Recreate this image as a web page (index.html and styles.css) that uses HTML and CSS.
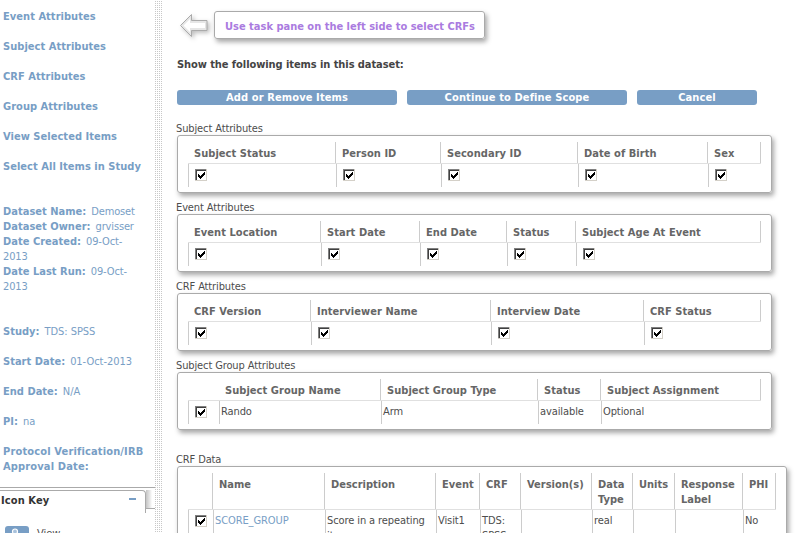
FILE: index.html
```html
<!DOCTYPE html>
<html lang="en">
<head>
<meta charset="utf-8">
<title>Dataset items</title>
<link rel="stylesheet" href="styles.css">
</head>
<body>
<svg class="defs" width="0" height="0" aria-hidden="true">
  <symbol id="box" viewBox="0 0 12 12">
    <path fill="#fff" d="M0 0h12v12H0z"/>
    <path fill="#d4d0c8" d="M11 0h1v12H0v-1h11z"/>
    <path fill="#808080" d="M0 0h11v1H1v10H0z"/>
    <path fill="#404040" d="M1 1h10v1H2v9H1z"/>
    <path fill="#000" d="M3 5h1v3H3zM4 6h1v3H4zM5 7h1v3H5zM6 6h1v3H6zM7 5h1v3H7zM8 4h1v3H8zM9 3h1v3H9z"/>
  </symbol>
</svg>
<div class="page">
  <aside class="side">
    <nav class="links">
      <a>Event Attributes</a>
      <a>Subject Attributes</a>
      <a>CRF Attributes</a>
      <a>Group Attributes</a>
      <a>View Selected Items</a>
      <a>Select All Items in Study</a>
    </nav>
    <div class="info">
      <p><b>Dataset Name:</b> <span>Demoset</span></p>
      <p><b>Dataset Owner:</b> <span>grvisser</span></p>
      <p><b>Date Created:</b> <span>09-Oct-<br>2013</span></p>
      <p><b>Date Last Run:</b> <span>09-Oct-<br>2013</span></p>
    </div>
    <div class="info study">
      <p><b>Study:</b> <span>TDS: SPSS</span></p>
      <p><b>Start Date:</b> <span>01-Oct-2013</span></p>
      <p><b>End Date:</b> <span>N/A</span></p>
      <p><b>PI:</b> <span>na</span></p>
      <p><b class="long">Protocol Verification/IRB<br>Approval Date:</b></p>
    </div>
    <div class="key">
      <div class="key-head">
        <div class="tab"><b>Icon Key</b><i class="minus"></i></div>
        <div class="tab-edge"></div>
      </div>
      <div class="key-row">
        <svg width="24" height="20" viewBox="0 0 24 20"><rect width="24" height="20" rx="3" fill="#789ec5"/><circle cx="10" cy="5.500" r="2.500" fill="#a9c2dc" stroke="#fff" stroke-width="1.200"/><path d="M12 8l4 4" stroke="#fff" stroke-width="1.500"/></svg>
        <span>View</span>
      </div>
    </div>
  </aside>
  <div class="divider"></div>
  <main class="main">
    <div class="hint">
      <svg class="arrow" width="32" height="28" viewBox="0 0 32 28"><path d="M1.500 13.500L12.500 2.500v6H28v10H12.500v6z" fill="#e6e6e6" stroke="#aaa"/><path d="M4.500 13.500l6.500-6.500v4h15V16H11v4z" fill="#fff"/></svg>
      <div class="callout">Use task pane on the left side to select CRFs</div>
    </div>
    <h1>Show the following items in this dataset:</h1>
    <div class="buttons">
      <button>Add or Remove Items</button>
      <button>Continue to Define Scope</button>
      <button class="small">Cancel</button>
    </div>

    <h2>Subject Attributes</h2>
    <section class="panel">
      <div class="row head subject"><b>Subject Status</b><b>Person ID</b><b>Secondary ID</b><b>Date of Birth</b><b>Sex</b></div>
      <div class="row body subject"><span><svg class="cb"><use href="#box"/></svg></span><span><svg class="cb"><use href="#box"/></svg></span><span><svg class="cb"><use href="#box"/></svg></span><span><svg class="cb"><use href="#box"/></svg></span><span><svg class="cb"><use href="#box"/></svg></span></div>
    </section>

    <h2>Event Attributes</h2>
    <section class="panel">
      <div class="row head event"><b>Event Location</b><b>Start Date</b><b>End Date</b><b>Status</b><b>Subject Age At Event</b></div>
      <div class="row body event"><span><svg class="cb"><use href="#box"/></svg></span><span><svg class="cb"><use href="#box"/></svg></span><span><svg class="cb"><use href="#box"/></svg></span><span><svg class="cb"><use href="#box"/></svg></span><span><svg class="cb"><use href="#box"/></svg></span></div>
    </section>

    <h2>CRF Attributes</h2>
    <section class="panel">
      <div class="row head crf"><b>CRF Version</b><b>Interviewer Name</b><b>Interview Date</b><b>CRF Status</b></div>
      <div class="row body crf"><span><svg class="cb"><use href="#box"/></svg></span><span><svg class="cb"><use href="#box"/></svg></span><span><svg class="cb"><use href="#box"/></svg></span><span><svg class="cb"><use href="#box"/></svg></span></div>
    </section>

    <h2>Subject Group Attributes</h2>
    <section class="panel">
      <div class="row head group"><b class="blank"></b><b>Subject Group Name</b><b>Subject Group Type</b><b>Status</b><b>Subject Assignment</b></div>
      <div class="row body group"><span><svg class="cb"><use href="#box"/></svg></span><span>Rando</span><span>Arm</span><span>available</span><span>Optional</span></div>
    </section>

    <h2 class="spaced">CRF Data</h2>
    <section class="panel wide">
      <div class="row head data"><b></b><b>Name</b><b>Description</b><b>Event</b><b>CRF</b><b>Version(s)</b><b>Data<br>Type</b><b>Units</b><b>Response<br>Label</b><b>PHI</b></div>
      <div class="row body data"><span><svg class="cb"><use href="#box"/></svg></span><span><a>SCORE_GROUP</a></span><span>Score in a repeating<br>item group</span><span>Visit1</span><span>TDS:<br>SPSS</span><span></span><span>real</span><span></span><span></span><span>No</span></div>
    </section>
  </main>
</div>
</body>
</html>
```
FILE: styles.css
```css
* { box-sizing: border-box; margin: 0; padding: 0; }
body {
  width: 807px;
  height: 533px;
  overflow: hidden;
  background: #fff;
  color: #4d4d4d;
  font: 11px/15px "DejaVu Sans Condensed", "DejaVu Sans", sans-serif;
  font-stretch: condensed;
}
.defs { position: absolute; }
.page { display: flex; height: 533px; overflow: hidden; }

.side { width: 155px; height: 533px; overflow: hidden; color: #789ec5; white-space: nowrap; }
.links { display: flex; flex-direction: column; gap: 15px; padding: 9px 0 0 3px; font-weight: bold; letter-spacing: 0.04px; }
.info { padding: 30px 0 0 3px; letter-spacing: -0.15px; }
.info b { letter-spacing: 0.02px; margin-right: 2px; }
.info .long { letter-spacing: 0.15px; }
.study { display: flex; flex-direction: column; gap: 15px; }
.study span { letter-spacing: -0.05px; }
.key { margin-top: 13px; border-top: 1px solid #aaa; color: #4d4d4d; }
.key-head { display: flex; }
.tab {
  display: flex;
  align-items: center;
  justify-content: space-between;
  width: 146px;
  height: 23px;
  margin-top: 2px;
  padding: 0 10px 3px 1px;
  border-top: 1px solid #aaa;
  border-right: 1px solid #aaa;
  border-top-right-radius: 4px;
}
.tab b { color: #333; letter-spacing: 0.1px; }
.minus { width: 7px; height: 2px; margin: 0 -1px 3px 0; background: #789ec5; }
.tab-edge {
  flex: 1;
  margin-top: 2px;
  height: 19px;
  border-bottom: 1px solid #aaa;
  background: linear-gradient(to right, #c4c4c4, #f2f2f2 5px, #fff 6px);
}
.key-row { display: flex; gap: 8px; padding: 13px 0 0 5px; }

.divider {
  width: 8px;
  margin-right: 14px;
  background-image: linear-gradient(#c8c8c8 1px, transparent 1px);
  background-position: 0 1px;
  background-size: 2px 2px;
  -webkit-mask: repeating-linear-gradient(to right, #000 0 1px, transparent 1px 2px);
  mask: repeating-linear-gradient(to right, #000 0 1px, transparent 1px 2px);
}

.main { flex: 1; }
.hint { display: flex; align-items: flex-start; gap: 3px; height: 57px; padding: 11px 0 0 2px; }
.arrow { margin-top: 1px; filter: drop-shadow(2px 2px 2px rgba(0, 0, 0, .25)); }
.callout {
  width: 271px;
  height: 28px;
  padding: 7px 10px;
  border: 1px solid #aaa;
  border-radius: 3px;
  box-shadow: 2px 3px 5px rgba(0, 0, 0, .35);
  color: #aa7be0;
  font-weight: bold;
  white-space: nowrap;
}
h1 { height: 33px; font-size: 11px; line-height: 15px; letter-spacing: -0.07px; color: #444; }
.buttons { display: flex; gap: 10px; height: 31px; }
button {
  width: 220px;
  height: 15px;
  border: 0;
  border-radius: 3px;
  background: #789ec5;
  color: #fff;
  font: bold 11px/15px "DejaVu Sans Condensed", "DejaVu Sans", sans-serif;
  letter-spacing: 0.12px;
}
.small { width: 120px; }
h2 { height: 21px; margin-left: -1px; padding-top: 8px; font-size: 11px; line-height: 14px; font-weight: normal; letter-spacing: -0.12px; }
.buttons + h2 { height: 14px; padding-top: 1px; }
.spaced { height: 36px; padding-top: 23px; }

.panel {
  width: 595px;
  height: 58px;
  padding: 6px 10px;
  border: 1px solid #aaa;
  border-radius: 3px;
  box-shadow: 2px 3px 5px rgba(0, 0, 0, .35);
}
.wide { width: 610px; height: 120px; }
.row { display: grid; }
.subject { grid-template-columns: 148px 105px 137px 130px 53px; }
.event { grid-template-columns: 133px 99px 87px 69px 185px; }
.crf { grid-template-columns: 123px 180px 153px 117px; }
.group { grid-template-columns: 31px 162px 157px 63px 160px; }
.data { grid-template-columns: 25px 112px 111px 44px 41px 71px 41px 42px 68px 33px; }
.head { height: 22px; border-bottom: 1px solid #e0e0e0; color: #666; letter-spacing: 0.05px; }
.head b { padding: 4px 0 0 6px; border-right: 1px solid #ccc; white-space: nowrap; }
.head .blank { border: 0; }
.head.data { height: 37px; letter-spacing: 0; }
.body { height: 23px; letter-spacing: -0.1px; }
.body span { padding: 3px 0 0 1px; border-left: 1px solid #ccc; white-space: nowrap; }
.body.data { height: 60px; }
.body a { color: #789ec5; }
.cb { display: block; width: 12px; height: 12px; margin: 2px 0 0 5px; }
```
